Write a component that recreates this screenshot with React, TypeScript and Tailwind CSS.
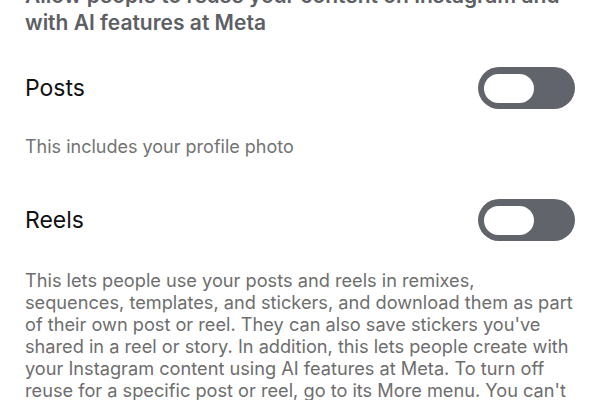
const Toggle = () => (
  <div className="flex h-[42px] w-[97px] shrink-0 items-center rounded-full bg-[#61646a] pl-[6px]">
    <span className="block h-[29px] w-[50px] rounded-full bg-white" />
  </div>
);

// wrapped the way the screen wraps it
const lines = [
  "This lets people use your posts and reels in remixes,",
  "sequences, templates, and stickers, and download them as part",
  "of their own post or reel. They can also save stickers you've",
  "shared in a reel or story. In addition, this lets people create with",
  "your Instagram content using AI features at Meta. To turn off",
  "reuse for a specific post or reel, go to its More menu. You can't",
  "turn off reuse for content that you've already shared.",
];

export default function App() {
  return (
    <div
      className="h-[400px] w-[600px] overflow-hidden bg-white px-[25px]"
      style={{ fontFamily: "Inter, 'Noto Sans', sans-serif" }}
    >
      <p className="-mt-[18px] text-[21px] font-semibold leading-[27px] text-[#5d5f64]">
        Allow people to reuse your content on Instagram and with AI features at Meta
      </p>

      <div className="mt-[31px] flex items-center justify-between">
        <span className="text-[23px] text-[#111]">Posts</span>
        <Toggle />
      </div>
      <p className="mt-[24px] text-[18px] text-[#737373]">This includes your profile photo</p>

      <div className="mt-[39px] flex items-center justify-between">
        <span className="text-[23px] text-[#111]">Reels</span>
        <Toggle />
      </div>
      <p className="mt-[28px] text-[18.2px] leading-[22px] text-[#6e6e6e]">
        {lines.map((l, i) => (
          <span key={i} className="block whitespace-nowrap">
            {l}
          </span>
        ))}
      </p>
    </div>
  );
}
